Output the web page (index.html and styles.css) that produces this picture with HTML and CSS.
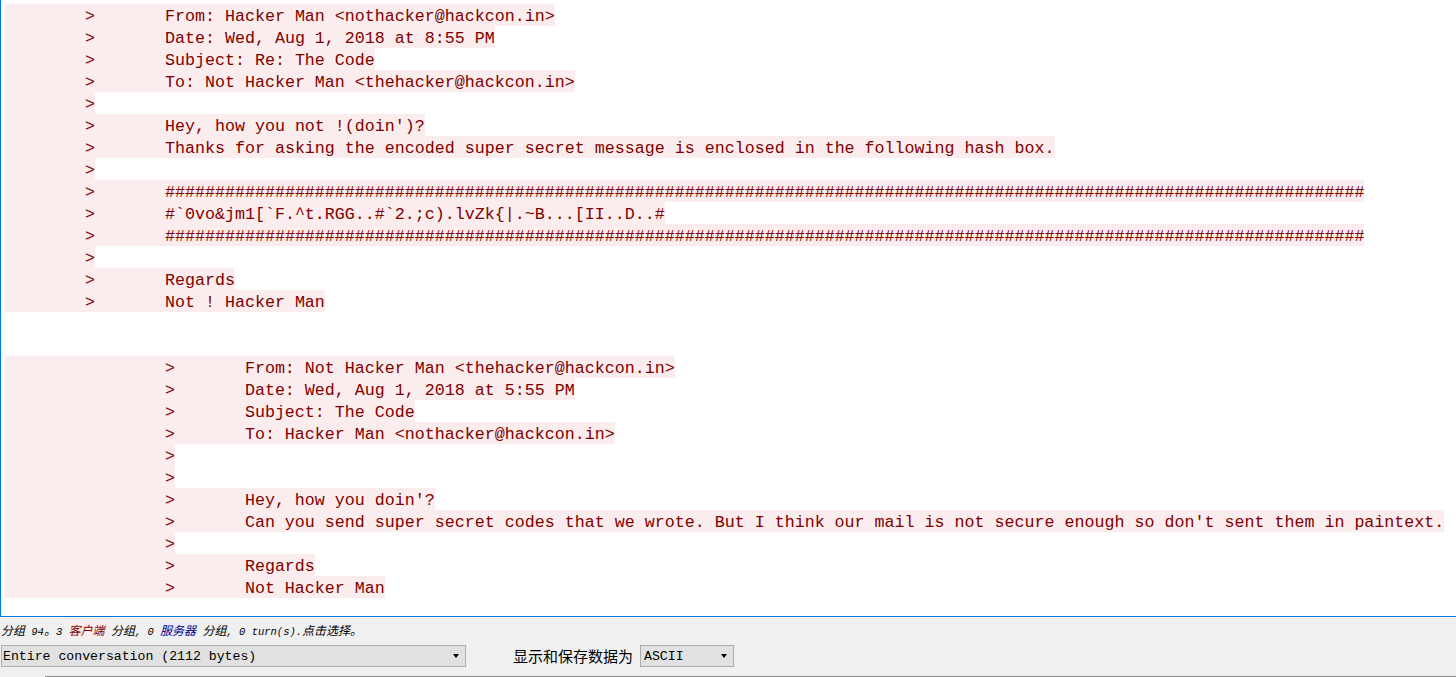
FILE: index.html
```html
<!DOCTYPE html>
<html>
<head>
<meta charset="utf-8">
<title>Follow TCP Stream</title>
<link rel="stylesheet" href="styles.css">
</head>
<body>
<div class="window">
  <div class="stream">
<div class="line">&#9;&gt;&#9;From: Hacker Man &lt;nothacker@hackcon.in&gt;</div>
<div class="line">&#9;&gt;&#9;Date: Wed, Aug 1, 2018 at 8:55 PM</div>
<div class="line">&#9;&gt;&#9;Subject: Re: The Code</div>
<div class="line">&#9;&gt;&#9;To: Not Hacker Man &lt;thehacker@hackcon.in&gt;</div>
<div class="line">&#9;&gt;</div>
<div class="line">&#9;&gt;&#9;Hey, how you not !(doin')?</div>
<div class="line">&#9;&gt;&#9;Thanks for asking the encoded super secret message is enclosed in the following hash box.</div>
<div class="line">&#9;&gt;</div>
<div class="line">&#9;&gt;&#9;########################################################################################################################</div>
<div class="line">&#9;&gt;&#9;#`0vo&amp;jm1[`F.^t.RGG..#`2.;c).lvZk{|.~B...[II..D..#</div>
<div class="line">&#9;&gt;&#9;########################################################################################################################</div>
<div class="line">&#9;&gt;</div>
<div class="line">&#9;&gt;&#9;Regards</div>
<div class="line">&#9;&gt;&#9;Not ! Hacker Man</div>
<div class="line"></div>
<div class="line"></div>
<div class="line">&#9;&#9;&gt;&#9;From: Not Hacker Man &lt;thehacker@hackcon.in&gt;</div>
<div class="line">&#9;&#9;&gt;&#9;Date: Wed, Aug 1, 2018 at 5:55 PM</div>
<div class="line">&#9;&#9;&gt;&#9;Subject: The Code</div>
<div class="line">&#9;&#9;&gt;&#9;To: Hacker Man &lt;nothacker@hackcon.in&gt;</div>
<div class="line">&#9;&#9;&gt;</div>
<div class="line">&#9;&#9;&gt;</div>
<div class="line">&#9;&#9;&gt;&#9;Hey, how you doin'?</div>
<div class="line">&#9;&#9;&gt;&#9;Can you send super secret codes that we wrote. But I think our mail is not secure enough so don't sent them in paintext.</div>
<div class="line">&#9;&#9;&gt;</div>
<div class="line">&#9;&#9;&gt;&#9;Regards</div>
<div class="line">&#9;&#9;&gt;&#9;Not Hacker Man</div>
  </div>
  <div class="status"><span class="cj">分组</span> 94<span class="cj">。</span>3 <span class="cj client">客户端</span> <span class="cj">分组</span>, 0 <span class="cj server">服务器</span> <span class="cj">分组</span>, 0 turn(s).<span class="cj">点击选择。</span></div>
  <div class="controls">
    <div class="combo conv"><span>Entire conversation (2112 bytes)</span><span class="arrow"></span></div>
    <div class="label">显示和保存数据为</div>
    <div class="combo enc"><span>ASCII</span><span class="arrow"></span></div>
  </div>
  <div class="findbar"></div>
</div>
</body>
</html>
```
FILE: styles.css
```css
html, body {
  margin: 0;
  padding: 0;
  height: 677px;
  overflow: hidden;
  background: #f0f0f0;
}

.window {
  display: flex;
  flex-direction: column;
  height: 677px;
}

.stream {
  flex: none;
  height: 612px;
  padding: 4px 0 0 4px;
  border-left: 1px solid #0078d7;
  border-bottom: 1px solid #0078d7;
  background: #ffffff;
  overflow: hidden;
  font-family: "Liberation Mono", monospace;
  font-size: 16.667px;
  color: #7f0000;
}

.line {
  height: 18px;
  padding-top: 4px;
  line-height: 18px;
  width: fit-content;
  background: #fbeded;
  white-space: pre;
  tab-size: 8;
  -moz-tab-size: 8;
}

.status {
  flex: none;
  margin-top: 5px;
  height: 16px;
  line-height: 16px;
  padding-left: 1px;
  font-family: "Liberation Mono", "Noto Sans CJK SC", monospace;
  font-size: 10.5px;
  font-style: italic;
  color: #000;
  white-space: pre;
  overflow: hidden;
}

.cj {
  font-family: "Noto Sans CJK SC", sans-serif;
  font-size: 12px;
}

.client {
  color: #7f0000;
  background: #fbeded;
}

.server {
  color: #00007f;
  background: #ededfb;
}

.controls {
  flex: none;
  display: flex;
  align-items: center;
  margin-top: 7px;
  height: 22px;
}

.combo {
  box-sizing: border-box;
  height: 22px;
  border: 1px solid #adadad;
  background: #e1e1e1;
  display: flex;
  align-items: center;
  justify-content: space-between;
  padding: 0 6px 0 1px;
  font-family: "Liberation Mono", monospace;
  font-size: 13.2px;
  color: #000;
  white-space: pre;
}

.combo.conv {
  margin-left: 1px;
  width: 465px;
}

.combo.enc {
  margin-left: 7px;
  width: 94px;
  padding-left: 3px;
}

.arrow {
  width: 0;
  height: 0;
  border-left: 3.5px solid transparent;
  border-right: 3.5px solid transparent;
  border-top: 4px solid #000;
}

.label {
  margin-left: 47px;
  font-family: "Noto Sans CJK SC", sans-serif;
  font-size: 15px;
  line-height: 22px;
  color: #000;
}

.findbar {
  flex: none;
  margin-top: 9px;
  margin-left: 45px;
  height: 10px;
  border-top: 1px solid #8c8c8c;
  background: #ffffff;
}
```
